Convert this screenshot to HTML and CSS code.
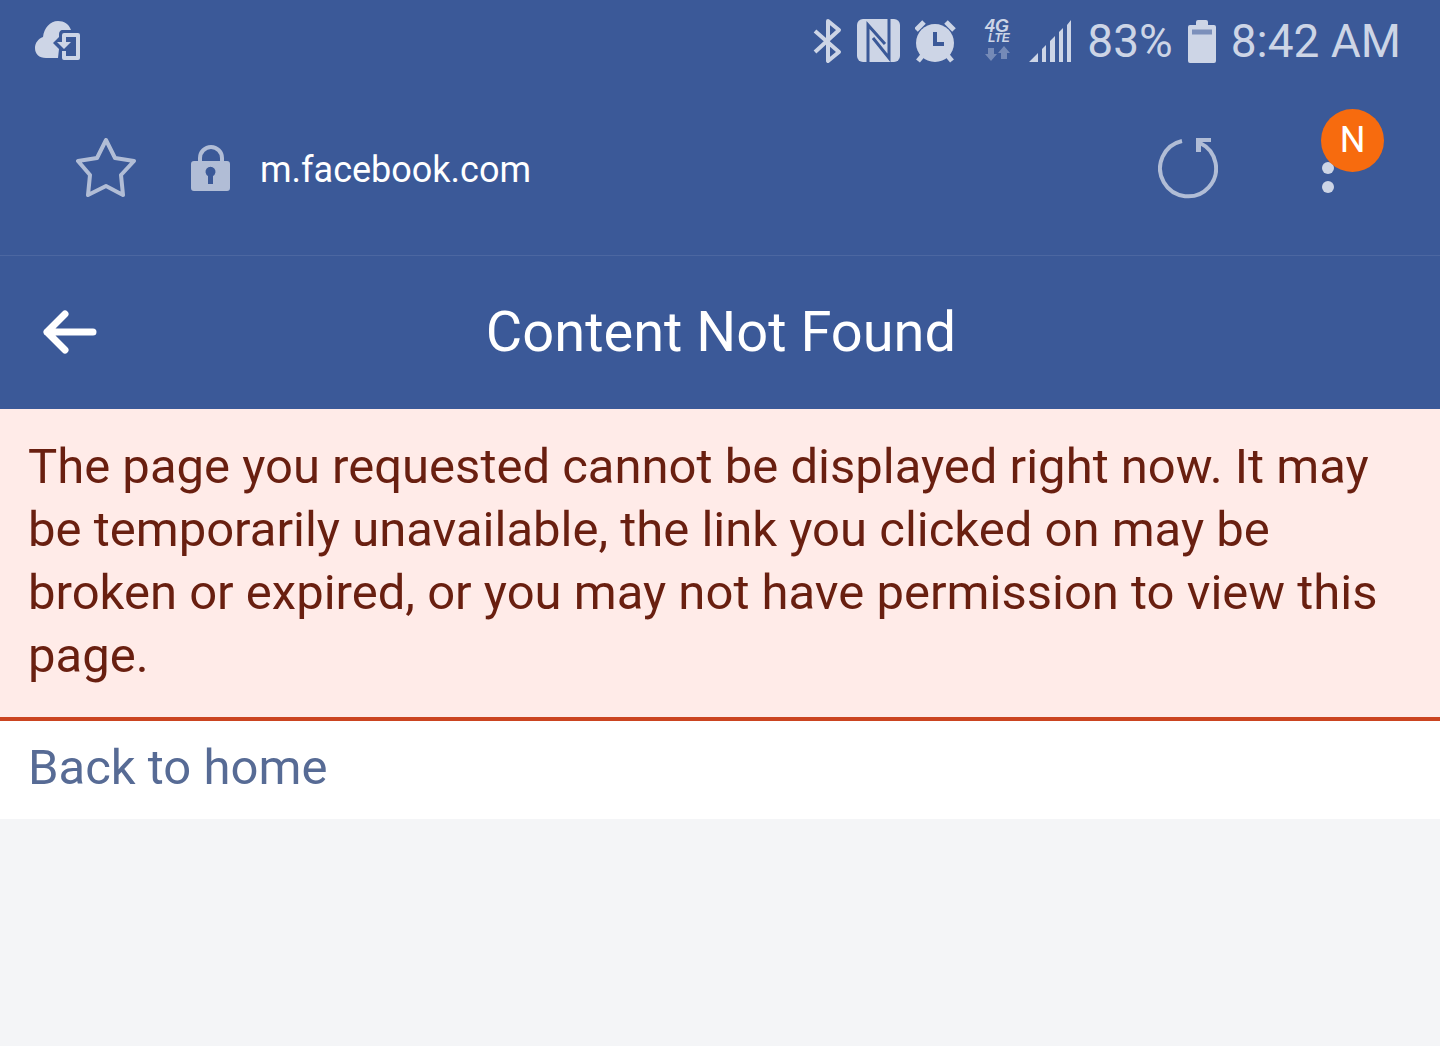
FILE: index.html
```html
<!DOCTYPE html>
<html lang="en">
<head>
<meta charset="utf-8">
<meta name="viewport" content="width=device-width, initial-scale=1">
<title>Content Not Found</title>
<link rel="stylesheet" href="styles.css">
</head>
<body>
<div class="status-bar">
  <svg class="cloud" width="48" height="44" viewBox="0 0 48 44" aria-hidden="true">
    <path fill="currentColor" d="M24 39H12C5 39 1 35 1 29c0-5 3-9 8-11C10 9 16 2 24 2c6 0 11 3 13 9h-8c-3 0-4 2-4 5v2l-6 6 6 6z"/>
    <path fill="none" stroke="currentColor" stroke-width="4" stroke-linejoin="round" d="M30 32v7h14V16H30v8"/>
    <path fill="currentColor" d="M23 23h14l-7 7z"/>
  </svg>
  <div class="status-icons">
    <svg width="30" height="46" viewBox="0 0 30 46" aria-hidden="true">
      <path fill="none" stroke="currentColor" stroke-width="4" stroke-linejoin="round" d="M3 13l24 21-11 9V3l11 9L3 34"/>
    </svg>
    <svg width="43" height="44" viewBox="0 0 43 44" aria-hidden="true">
      <rect width="43" height="43" rx="6" fill="currentColor"/>
      <path class="cut" fill="none" stroke-width="3" d="M11 44V6L28 25M16 19L32 39V0"/>
    </svg>
    <svg class="alarm" width="42" height="44" viewBox="0 0 42 44" aria-hidden="true">
      <circle cx="20" cy="24" r="19" fill="currentColor"/>
      <path stroke="currentColor" stroke-width="5" d="M1 11l8-8M39 11l-8-8M8 36l-5 6M32 36l5 6"/>
      <path class="cut" fill="none" stroke-width="4" d="M20 13v12h9"/>
    </svg>
    <svg class="network" width="28" height="44" viewBox="0 0 28 44" aria-hidden="true">
      <text class="net-4g" x="-1" y="13">4G</text>
      <text class="net-lte" x="2" y="23">LTE</text>
      <path fill="currentColor" opacity=".4" d="M2 29h6v6h3l-6 7-6-7h3zM15 40v-6h-3l6-7 6 7h-3v6z"/>
    </svg>
    <svg class="signal" width="43" height="42" viewBox="0 0 43 42" aria-hidden="true">
      <path fill="currentColor" d="M0 42l9-9v9zM13 29l4-4v17h-4zM21 21l5-5v26h-5zM30 12l4-4v34h-4zM38 5l4-5v42h-4z"/>
    </svg>
    <span>83%</span>
    <svg class="battery" width="28" height="43" viewBox="0 0 28 43" aria-hidden="true">
      <path fill="currentColor" d="M8 5V2q0-2 2-2h8q2 0 2 2v3h6q2 0 2 2v34q0 2-2 2H2q-2 0-2-2V7q0-2 2-2z"/>
      <path class="cut" stroke-width="5" opacity=".55" d="M4 12h20"/>
    </svg>
    <span>8:42 AM</span>
  </div>
</div>
<div class="browser-bar">
  <button class="icon-button star" type="button" aria-label="Bookmark">
    <svg width="60" height="60" viewBox="0 0 60 60"><path fill="none" stroke="currentColor" stroke-width="4" stroke-linejoin="round" d="M30 2L39 20 58 23 45 37 47 57 30 48 12 57 14 37 2 23 21 20z"/></svg>
  </button>
  <svg class="lock" width="39" height="46" viewBox="0 0 39 46" aria-hidden="true">
    <path fill="none" stroke="currentColor" stroke-width="4" d="M9 18v-5a11 11 0 0 1 22 0v5"/>
    <path fill="currentColor" fill-rule="evenodd" d="M3 16h33q3 0 3 3v24q0 3-3 3H3q-3 0-3-3V19q0-3 3-3zM17 39h5v-8a5 5 0 1 0-5 0z"/>
  </svg>
  <span class="address">m.facebook.com</span>
  <button class="icon-button reload" type="button" aria-label="Reload">
    <svg width="60" height="62" viewBox="0 0 60 62"><path fill="none" stroke="currentColor" stroke-width="4" d="M24 4A28 28 0 1 0 42 6"/><path fill="currentColor" d="M38 1h15v4H43v10h-5z"/></svg>
  </button>
  <button class="icon-button menu" type="button" aria-label="Menu">
    <svg width="12" height="50" viewBox="0 0 12 50"><g fill="currentColor"><circle cx="7" cy="6" r="5"/><circle cx="6" cy="25" r="6"/><circle cx="6" cy="44" r="6"/></g></svg>
    <span class="badge">N</span>
  </button>
</div>
<header class="page-header">
  <button class="icon-button back" type="button" aria-label="Back">
    <svg width="54" height="44" viewBox="0 0 54 44"><path fill="none" stroke="currentColor" stroke-width="7" stroke-linecap="round" stroke-linejoin="round" d="M22 4L4 22l18 18M4 22h46"/></svg>
  </button>
  <h1>Content Not Found</h1>
</header>
<main>
  <p class="error">The page you requested cannot be displayed right now. It may be temporarily unavailable, the link you clicked on may be broken or expired, or you may not have permission to view this page.</p>
  <div class="home"><a href="#">Back to home</a></div>
</main>
</body>
</html>
```
FILE: styles.css
```css
* {
  box-sizing: border-box;
}

body {
  margin: 0;
  background: #f4f5f7;
  font-family: Roboto, sans-serif;
  font-size: 49px;
}

svg {
  display: block;
  flex: none;
}

.status-bar,
.browser-bar,
.page-header {
  display: flex;
  align-items: center;
  background: #3b5998;
  color: #fff;
}

.status-bar {
  justify-content: space-between;
  height: 84px;
  padding: 0 39px 2px 34px;
  font-size: 46px;
  color: #cdd5e6;
}

.status-icons {
  display: flex;
  align-items: center;
  gap: 15px;
  white-space: nowrap;
}

.cut {
  stroke: #3b5998;
}

.alarm {
  margin-right: 14px;
}

.network {
  overflow: visible;
  fill: currentColor;
  font-family: "Liberation Sans", sans-serif;
  font-style: italic;
  font-weight: 700;
}

.net-4g {
  font-size: 18px;
}

.net-lte {
  font-size: 12px;
}

.browser-bar {
  height: 172px;
  padding: 0 56px 3px 76px;
  border-bottom: 1px solid #4c67a1;
}

.icon-button {
  display: block;
  padding: 0;
  border: 0;
  background: none;
  color: #b1bdd6;
  font: inherit;
}

.lock {
  margin: 0 30px 0 55px;
  color: #b1bdd6;
}

.address {
  flex: 1;
  padding-top: 3px;
  font-size: 36px;
}

.menu {
  position: relative;
  width: 62px;
  margin-left: 104px;
  color: #cdd5e6;
}

.badge {
  position: absolute;
  top: -34px;
  left: -1px;
  width: 63px;
  height: 63px;
  border-radius: 50%;
  background: #f76b0e;
  color: #fff;
  font-size: 36px;
  line-height: 63px;
}

.page-header {
  height: 153px;
  padding: 0 41px 2px 43px;
}

.page-header .back {
  color: #fff;
}

h1 {
  flex: 1;
  margin: 0 54px 0 0;
  font-size: 56px;
  font-weight: 400;
  text-align: center;
}

.error {
  margin: 0;
  padding: 26px 28px 30px;
  border-bottom: 4px solid #cb4420;
  background: #ffebe8;
  color: #691f10;
  line-height: 63px;
}

.home {
  padding: 15px 28px 20px;
  background: #fff;
  line-height: 63px;
}

.home a {
  color: #576b95;
  text-decoration: none;
}
```
